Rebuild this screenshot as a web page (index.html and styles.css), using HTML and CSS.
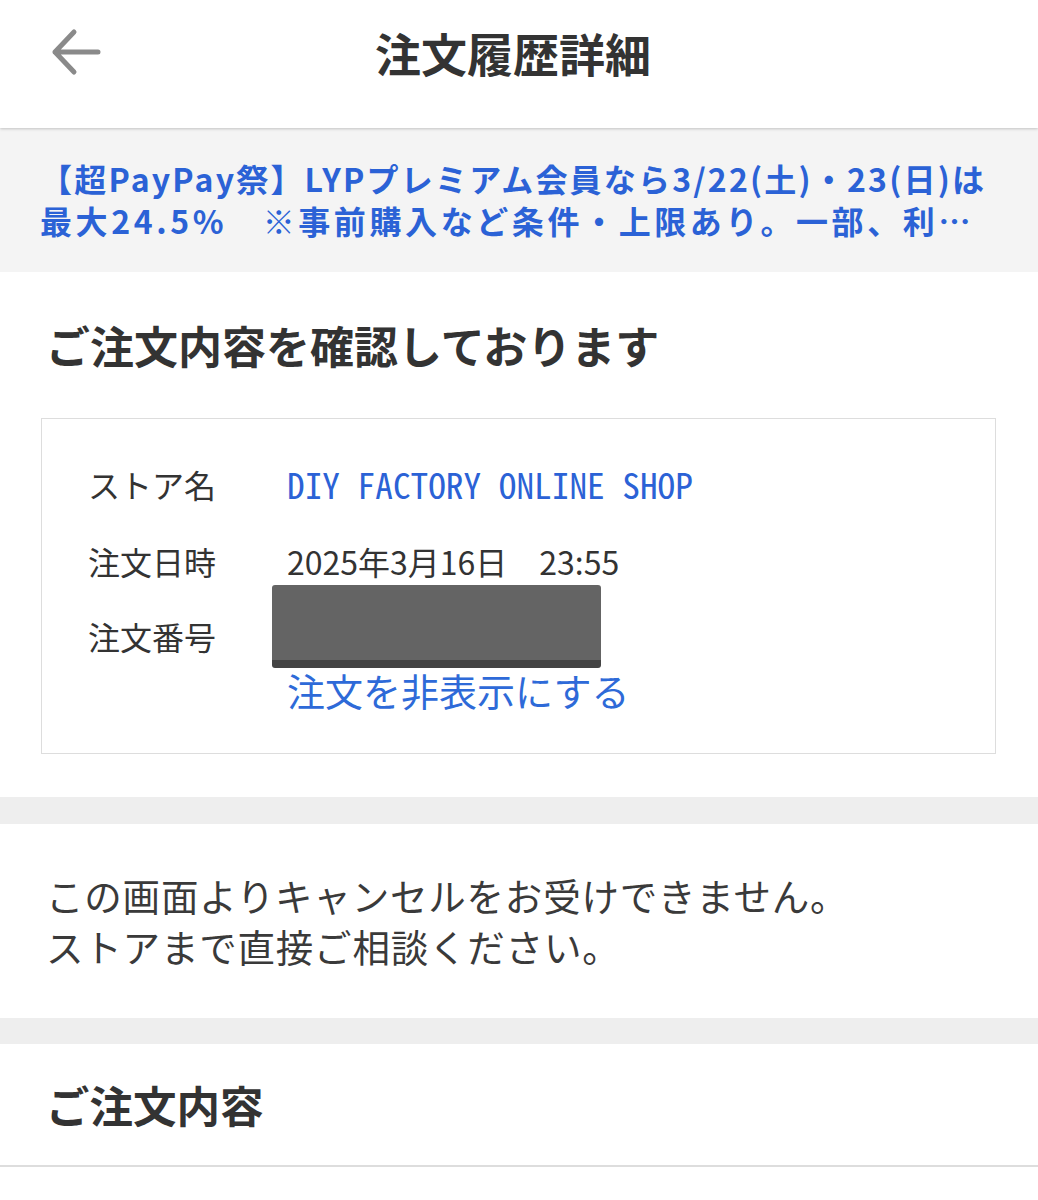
FILE: index.html
```html
<!DOCTYPE html>
<html lang="ja">
<head>
<meta charset="utf-8">
<title>注文履歴詳細</title>
<link rel="stylesheet" href="styles.css">
</head>
<body>
<header class="topbar">
  <div class="topbar-left">
    <svg class="back" width="52" height="48" viewBox="0 0 52 48" aria-hidden="true">
      <path d="M48 24 H5 M24 4 L5 24 L24 44" fill="none" stroke="#8a8a8a" stroke-width="5" stroke-linecap="round" stroke-linejoin="round"/>
    </svg>
  </div>
  <h1 class="topbar-title">注文履歴詳細</h1>
  <div class="topbar-right"></div>
</header>

<div class="promo">
  <span class="promo-line">【超PayPay祭】LYPプレミアム会員なら3/22(土)・23(日)は</span>
  <span class="promo-line promo-second">最大24.5%　※事前購入など条件・上限あり。一部、利…</span>
</div>

<section class="panel status">
  <h2 class="heading">ご注文内容を確認しております</h2>
  <div class="infobox">
    <div class="info-row">
      <div class="info-label">ストア名</div>
      <div class="info-value store">DIY FACTORY ONLINE SHOP</div>
    </div>
    <div class="info-row">
      <div class="info-label">注文日時</div>
      <div class="info-value">2025年3月16日　23:55</div>
    </div>
    <div class="info-row last">
      <div class="info-label">注文番号</div>
      <div class="info-value">
        <div class="order-no"><span class="order-text">00000000000</span><span class="redact"></span></div>
        <a class="hide-link" href="#">注文を非表示にする</a>
      </div>
    </div>
  </div>
</section>

<div class="gap"></div>

<section class="panel notice">
  <p>この画面よりキャンセルをお受けできません。<br>ストアまで直接ご相談ください。</p>
</section>

<div class="gap"></div>

<section class="panel contents">
  <h2 class="heading">ご注文内容</h2>
</section>
</body>
</html>
```

FILE: styles.css
```css
* { box-sizing: border-box; }
html, body {
  margin: 0;
  padding: 0;
  background: #ffffff;
}
body {
  width: 1038px;
  font-family: "Noto Sans CJK JP", "Noto Sans", sans-serif;
  color: #333333;
}

.topbar {
  height: 128px;
  display: grid;
  grid-template-columns: 1fr auto 1fr;
  align-items: start;
  padding: 0 12px 0 0;
  background: #ffffff;
  position: relative;
  z-index: 2;
  box-shadow: 0 1px 2px rgba(0,0,0,0.12), 0 2px 3px rgba(0,0,0,0.06);
}
.topbar-left {
  padding: 28px 0 0 50px;
}
.back { display: block; }
.topbar-title {
  margin: 0;
  padding-top: 20px;
  font-size: 46px;
  line-height: 64px;
  font-weight: 700;
  color: #333333;
}

.promo {
  background: #f4f4f4;
  padding: 29px 20px 31px 40px;
  color: #2b62d6;
  font-weight: 700;
  font-size: 32px;
  line-height: 42px;
  letter-spacing: 2.2px;
}
.promo-line {
  display: block;
  white-space: nowrap;
}
.promo-second {
  letter-spacing: 3.6px;
}

.panel { background: #ffffff; }

.heading {
  margin: 0;
  font-size: 43.5px;
  line-height: 60px;
  font-weight: 700;
  color: #333333;
}

.status {
  padding: 43px 42px 43px 41px;
}
.status .heading {
  padding-left: 5px;
  margin-bottom: 43px;
  font-size: 44px;
}

.infobox {
  border: 1px solid #dddddd;
  padding: 42px 46px 40px 46px;
}
.info-row {
  display: grid;
  grid-template-columns: 199px 1fr;
  align-items: start;
  margin-bottom: 31px;
}
.info-row.last { margin-bottom: 0; }
.info-row:nth-child(2) { margin-bottom: 29px; }
.info-label {
  font-size: 32px;
  line-height: 46px;
  color: #333333;
}
.info-value {
  font-size: 32px;
  line-height: 46px;
  color: #333333;
}
.info-value.store {
  font-family: "Noto Sans Mono CJK JP", "DejaVu Sans Mono", monospace;
  font-size: 35.3px;
  color: #2b62d6;
}
.order-no {
  position: relative;
  height: 46px;
}
.order-text { color: #333333; }
.redact {
  position: absolute;
  left: -15px;
  top: -28px;
  width: 329px;
  height: 83px;
  background: #646464;
  border-radius: 3px;
  border-bottom: 8px solid #444444;
}
.hide-link {
  display: block;
  margin-top: 8px;
  font-size: 38px;
  line-height: 46px;
  color: #2e6ad8;
  text-decoration: none;
}

.gap {
  height: 27px;
  background: #eeeeee;
}
.gap + .notice + .gap { height: 26px; }

.notice {
  padding: 45px 46px 47px 46px;
}
.notice p {
  margin: 0;
  font-size: 37.5px;
  line-height: 51px;
  letter-spacing: 0.8px;
  color: #3a3a3a;
}

.contents {
  padding: 31px 46px 30px 46px;
  border-bottom: 2px solid #dddddd;
}
```
